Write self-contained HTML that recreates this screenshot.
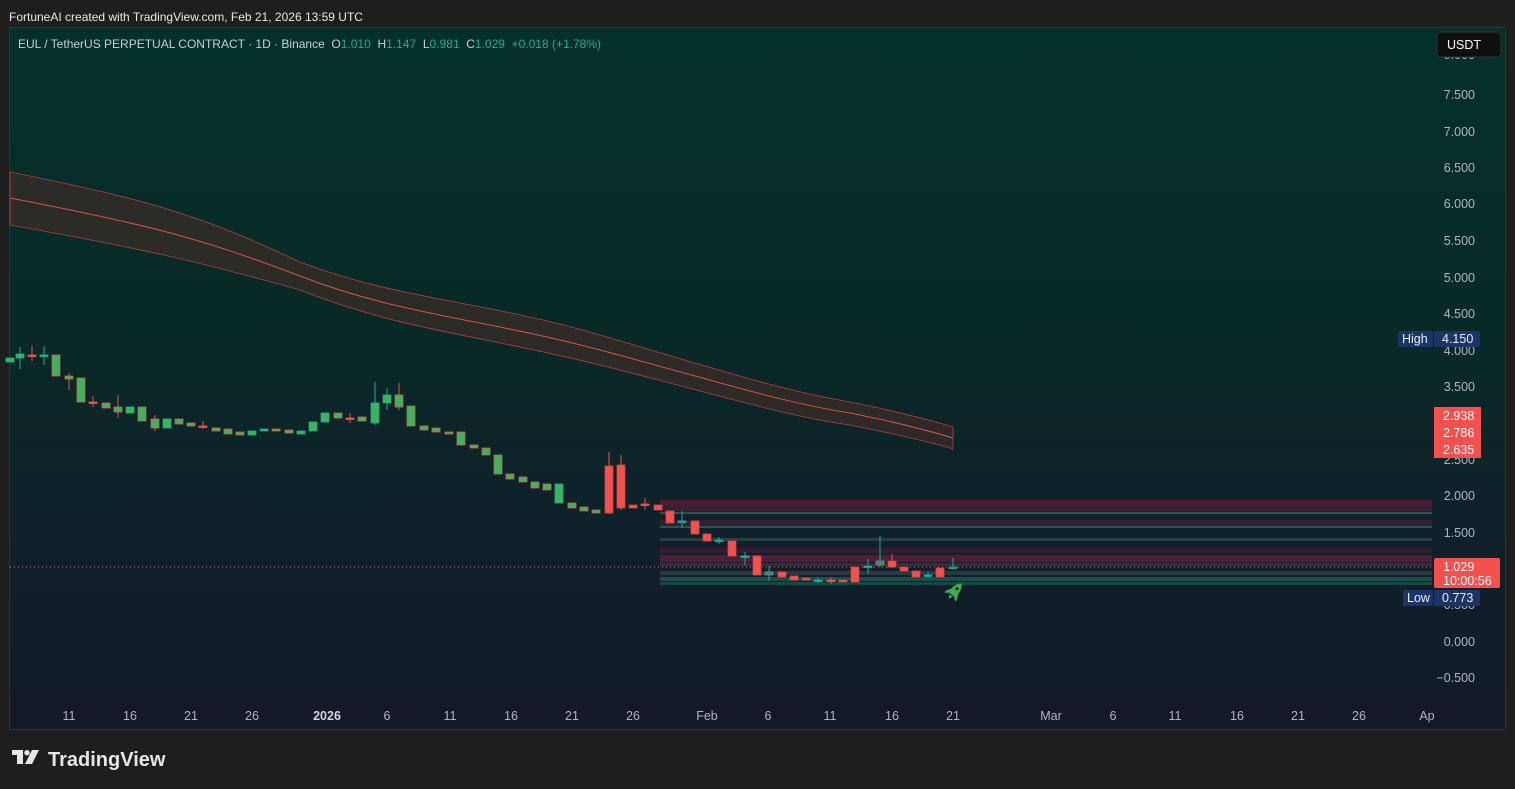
<!DOCTYPE html>
<html><head><meta charset="utf-8"><style>
html,body{margin:0;padding:0;background:#1e1e1e;width:1515px;height:789px;overflow:hidden;font-family:"Liberation Sans",sans-serif}
.top{position:absolute;left:9px;top:10px;font-size:12px;color:#e8e8e8}
#chart{position:absolute;left:9px;top:27px;width:1497px;height:703px;border:1px solid #333;box-sizing:border-box;background:linear-gradient(#03302a 0%,#082a26 40%,#10202a 75%,#121a24 100%)}
</style></head><body>
<div class="top">FortuneAI created with TradingView.com, Feb 21, 2026 13:59 UTC</div>
<div id="chart"></div>
<svg id="s" width="1515" height="789" style="position:absolute;left:0;top:0" xmlns="http://www.w3.org/2000/svg">
<rect x="10" y="704" width="1495" height="25" fill="#131a26"/>
<path d="M10,172 C150,200 200,215 300,262 C400,300 480,300 600,335 C720,370 780,390 850,402 C900,412 930,420 953,427 L953,449 C930,442 900,435 850,425 C780,415 720,395 600,365 C480,335 400,330 300,290 C200,262 150,250 10,225 Z" fill="#4a2e28" fill-opacity="0.55" stroke="#b0403c" stroke-width="0.8"/>
<path d="M10,198 C150,225 200,238 300,276 C400,315 480,318 600,350 C720,382 780,402 850,413 C900,423 930,431 953,438" fill="none" stroke="#d8504a" stroke-width="1"/>
<g id="zones"></g>
<line x1="10" y1="567" x2="1432" y2="567" stroke="#e87a80" stroke-dasharray="1,3" stroke-width="1"/>
<g id="c"></g>
<g font-family="Liberation Sans" font-size="12.5" fill="#b2b5be" text-anchor="middle" id="t"></g>
<g font-family="Liberation Sans" font-size="12.5" fill="#b2b5be" text-anchor="end" id="p"></g>
<rect x="1437" y="32" width="64" height="25" rx="4" fill="#0f0f0f" stroke="#333"/>
<text x="1447" y="49" font-family="Liberation Sans" font-size="12.5" fill="#fff">USDT</text>
<rect x="1398" y="331" width="35" height="16" rx="2" fill="#1c3566"/><text x="1402" y="343" font-family="Liberation Sans" font-size="12.5" fill="#e8ecf5">High</text>
<rect x="1434" y="331" width="46" height="16" rx="2" fill="#1c3566"/><text x="1442" y="343" font-family="Liberation Sans" font-size="12.5" fill="#e8ecf5">4.150</text>
<rect x="1434" y="407" width="47" height="51" fill="#f6504e"/>
<g font-family="Liberation Sans" font-size="12.5" fill="#fff"><text x="1443" y="420">2.938</text><text x="1443" y="437">2.786</text><text x="1443" y="454">2.635</text></g>
<rect x="1434" y="558" width="66" height="30" rx="2" fill="#f6504e"/>
<g font-family="Liberation Sans" font-size="12.5" fill="#fff"><text x="1443" y="571">1.029</text><text x="1443" y="585">10:00:56</text></g>
<rect x="1403" y="590" width="30" height="16" rx="2" fill="#1c3566"/><text x="1407" y="602" font-family="Liberation Sans" font-size="12.5" fill="#e8ecf5">Low</text>
<rect x="1434" y="590" width="46" height="16" rx="2" fill="#1c3566"/><text x="1442" y="602" font-family="Liberation Sans" font-size="12.5" fill="#e8ecf5">0.773</text>
<g transform="translate(955,591) rotate(40)" fill="#3fae4a"><path d="M0,-10 C5,-6 5,2 3.5,5 L-3.5,5 C-5,2 -5,-6 0,-10Z"/><path d="M-3.5,-1 L-7,5 L-7,8 L-3,5Z M3.5,-1 L7,5 L7,8 L3,5Z M-2,6 L2,6 L0,10Z"/><circle cx="0" cy="-3" r="1.6" fill="#10202a"/></g>
<g transform="translate(12,750)" fill="#e6e6e6"><path d="M0,0 H11 V14 H5 V5 H0Z"/><circle cx="15" cy="2.7" r="2.7"/><path d="M20,0 H27 L20,14 H13Z"/></g>
<text x="48" y="766" font-family="Liberation Sans" font-size="20" font-weight="bold" fill="#e6e6e6">TradingView</text>
</svg>
<div style="position:absolute;left:18px;top:37px;font-size:12px;color:#c8d0cc;white-space:nowrap">EUL / TetherUS PERPETUAL CONTRACT · 1D · Binance &nbsp;O<span style="color:#22ab94">1.010</span> &nbsp;H<span style="color:#22ab94">1.147</span> &nbsp;L<span style="color:#22ab94">0.981</span> &nbsp;C<span style="color:#22ab94">1.029</span> &nbsp;<span style="color:#22ab94">+0.018 (+1.78%)</span></div>
<script>
var NS="http://www.w3.org/2000/svg";
function el(g,t,a){var e=document.createElementNS(NS,t);for(var k in a)e.setAttribute(k,a[k]);if(a.txt){e.textContent=a.txt}document.getElementById(g).appendChild(e);return e;}
var z=[[500,6,"#5a1e35",0.8],[506,5,"#4a2038",0.7],[512,2,"#3a5550",0.9],[520,6,"#4a2035",0.6],[526,2,"#1f6a5a",0.8],[538,3,"#3a4a50",0.7],[548,5,"#4a1e35",0.6],[555,7,"#6a2040",0.7],[563,3,"#5a2a40",0.7],[571,4,"#3a4a55",0.6],[577,4,"#1e5a50",0.8],[582,3,"#1a5a50",0.7]];
z.forEach(function(q){el("zones","rect",{x:660,y:q[0],width:772,height:q[1],fill:q[2],"fill-opacity":q[3]});});
var d=[[10,358,362,0,0,'g'],[20,354,358,347,369,'g'],[32,355,356,346,361,'r'],[44,355,356,346,365,'g'],[56,355,376,0,0,'b'],[69,376,379,373,390,'b'],[81,378,402,0,0,'b'],[93,402,403,396,407,'r'],[106,403,408,0,0,'b'],[118,407,412,395,418,'b'],[130,407,413,0,0,'g'],[142,407,421,0,0,'b'],[155,419,428,415,431,'b'],[167,419,428,0,0,'g'],[179,419,424,0,0,'b'],[191,423,426,0,0,'b'],[203,426,427,421,429,'r'],[216,428,431,0,0,'b'],[228,429,434,0,0,'b'],[240,432,435,0,0,'b'],[252,431,435,0,0,'g'],[264,429,431,0,0,'g'],[276,429,431,0,0,'b'],[289,430,433,0,0,'b'],[301,431,434,0,0,'g'],[313,422,431,0,0,'g'],[325,413,422,0,0,'g'],[338,413,418,0,0,'b'],[350,418,419,413,423,'r'],[362,417,421,0,0,'b'],[375,403,423,382,425,'g'],[387,395,403,388,410,'g'],[399,395,407,383,410,'b'],[411,406,426,0,0,'b'],[424,426,430,0,0,'b'],[436,428,432,0,0,'b'],[449,432,434,0,0,'b'],[461,432,445,0,0,'b'],[474,445,448,0,0,'b'],[486,448,455,0,0,'b'],[498,455,474,0,0,'b'],[510,474,479,0,0,'b'],[523,477,482,0,0,'b'],[535,482,488,0,0,'b'],[547,484,490,0,0,'b'],[559,484,503,0,0,'g'],[572,503,508,0,0,'b'],[584,507,511,0,0,'b'],[596,510,513,0,0,'b'],[609,466,513,452,514,'R'],[621,465,508,455,510,'R'],[633,505,508,0,0,'R'],[645,504,505,498,510,'r'],[658,505,510,0,0,'R'],[670,511,523,0,0,'R'],[682,521,522,511,528,'x'],[695,521,534,0,0,'R'],[707,534,541,0,0,'R'],[719,540,541,537,544,'x'],[732,541,556,0,0,'R'],[745,556,557,552,565,'x'],[757,556,575,0,0,'R'],[769,572,575,566,581,'G'],[782,572,577,0,0,'R'],[794,576,580,0,0,'R'],[806,578,580,0,0,'R'],[818,580,581,577,583,'x'],[831,580,581,577,584,'r'],[843,580,582,0,0,'R'],[855,567,582,0,0,'R'],[868,566,567,559,574,'x'],[880,561,565,536,567,'G'],[892,561,567,554,568,'R'],[904,567,571,0,0,'R'],[916,571,577,0,0,'R'],[928,575,576,572,578,'x'],[940,568,577,0,0,'R'],[953,567,568,558,570,'G']];
d.forEach(function(c){var x=c[0],t=c[5];
 var fill,st,wk;
 if(t=='g'){fill='#3cb35c';st='#22ab94';wk='#22ab94'}
 else if(t=='b'){fill='#3cb35c';st='#d85a50';wk='#d85a50'}
 else if(t=='r'){fill='#f6504e';st='#f6504e';wk='#d85a50'}
 else if(t=='R'){fill='#f6504e';st='#c44a4a';wk='#f6504e'}
 else if(t=='G'){fill='#7a6a6a';st='#22ab94';wk='#22ab94'}
 else {fill='#22ab94';st='#22ab94';wk='#22ab94'}
 if(c[3])el("c","line",{x1:x,x2:x,y1:c[3],y2:c[4],stroke:wk,"stroke-width":1});
 var h=Math.max(1.5,c[2]-c[1]);
 el("c","rect",{x:x-4,y:c[1],width:8,height:h,fill:fill,stroke:st,"stroke-width":0.8});
});
var tl=[[69,"11"],[130,"16"],[191,"21"],[252,"26"],[327,"2026"],[387,"6"],[450,"11"],[511,"16"],[572,"21"],[633,"26"],[707,"Feb"],[768,"6"],[830,"11"],[892,"16"],[953,"21"],[1051,"Mar"],[1113,"6"],[1175,"11"],[1237,"16"],[1298,"21"],[1359,"26"],[1427,"Ap"]];
tl.forEach(function(q){var e=el("t","text",{x:q[0],y:720,txt:q[1]});if(q[1]=="2026"){e.setAttribute("font-weight","bold");e.setAttribute("fill","#d1d4dc")}});
var pl=[[59,"8.000"],[99,"7.500"],[136,"7.000"],[172,"6.500"],[208,"6.000"],[245,"5.500"],[282,"5.000"],[318,"4.500"],[355,"4.000"],[391,"3.500"],[464,"2.500"],[500,"2.000"],[537,"1.500"],[609,"0.500"],[646,"0.000"],[682,"\u22120.500"]];
pl.forEach(function(q){el("p","text",{x:1475,y:q[0],txt:q[1]});});
</script>
</body></html>
